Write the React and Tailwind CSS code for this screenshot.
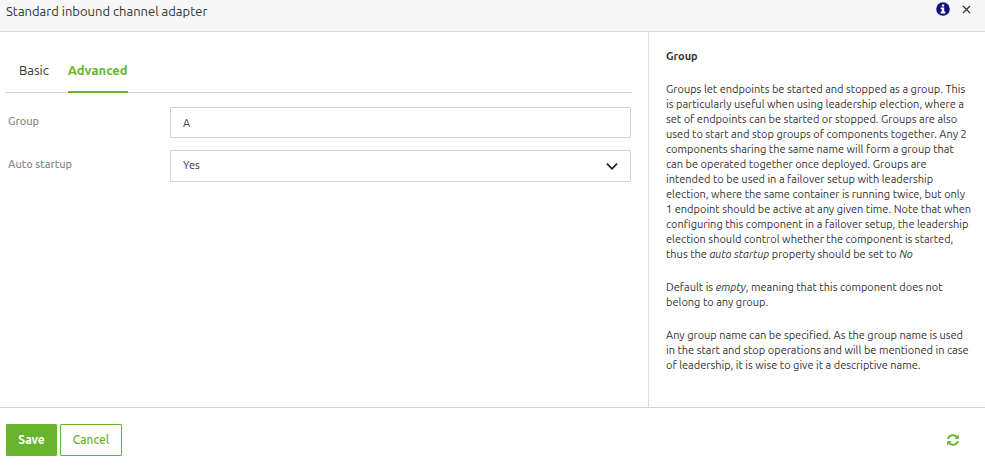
import React, { useState } from 'react';

const tabs = ['Basic', 'Advanced'];

const InfoIcon = () => (
    <svg width="14" height="14" viewBox="0 0 14 14">
        <circle cx="7" cy="7" r="6.8" fill="currentColor" />
        <path d="M5.8 2.4 H8.2 V4.4 H5.8 Z M4.6 5.6 H8.2 V9.6 H9.4 V11.4 H4.6 V9.6 H5.8 V7.3 H4.6 Z" fill="#ffffff" />
    </svg>
);

const RefreshIcon = () => (
    <svg width="12" height="12" viewBox="0 0 12 12" fill="none">
        <path d="M1 5 A5 4.6 0 0 1 9.8 2.9 M11 7 A5 4.6 0 0 1 2.2 9.1" stroke="currentColor" strokeWidth="1.9" />
        <path d="M11.8 0.6 V5 H7.4 Z M0.2 11.4 V7 H4.6 Z" fill="currentColor" />
    </svg>
);

const Header = ({ title }) => (
    <header className="flex h-8 items-start justify-between border-b border-[#dcdcdc] bg-[#f7f7f7] pl-1.5 pr-[11px]">
        <h1 className="text-[13px] leading-[22px]">{title}</h1>
        <div className="flex h-[18px] items-center gap-2">
            <button type="button" aria-label="Info" className="text-[#10107f]">
                <InfoIcon />
            </button>
            <button type="button" aria-label="Close" className="flex h-4 w-4 items-center justify-center">
                <svg width="9" height="9" viewBox="0 0 9 9" fill="none" stroke="currentColor" strokeWidth="1.2">
                    <path d="M1 1 L8 8 M8 1 L1 8" />
                </svg>
            </button>
        </div>
    </header>
);

const Tabs = ({ active, onChange }) => (
    <nav className="flex gap-[19px] border-b border-[#d4d4d4] pl-[13px]">
        {tabs.map((tab) => (
            <button
                key={tab}
                type="button"
                onClick={() => onChange(tab)}
                className={`-mb-px h-[37px] border-b-2 pb-2 text-[13px] leading-5 ${tab === active ? 'border-[#69b42e] font-bold text-[#69b42e]' : 'border-transparent'}`}
            >
                {tab}
            </button>
        ))}
    </nav>
);

const HelpPanel = () => (
    <aside className="w-[337px] shrink-0 border-l border-[#dcdcdc] pl-[17px] pr-3 pt-[17px] text-[11px] leading-[15px]">
        <h2 className="mb-[18px] font-semibold">Group</h2>
        <p className="mb-[18px]">
            Groups let endpoints be started and stopped as a group. This is particularly useful when using
            leadership election, where a set of endpoints can be started or stopped. Groups are also used to
            start and stop groups of components together. Any 2 components sharing the same name will form a
            group that can be operated together once deployed. Groups are intended to be used in a failover
            setup with leadership election, where the same container is running twice, but only 1 endpoint
            should be active at any given time. Note that when configuring this component in a failover setup,
            the leadership election should control whether the component is started, thus the{' '}
            <em>auto startup</em> property should be set to <em>No</em>
        </p>
        <p className="mb-[18px]">
            Default is <em>empty</em>, meaning that this component does not belong to any group.
        </p>
        <p>
            Any group name can be specified. As the group name is used in the start and stop operations and
            will be mentioned in case of leadership, it is wise to give it a descriptive name.
        </p>
    </aside>
);

const App = () => {
    const [activeTab, setActiveTab] = useState('Advanced');
    const [group, setGroup] = useState('A');
    const [autoStartup, setAutoStartup] = useState('Yes');

    return (
        <div className="flex min-h-screen flex-col bg-white font-['Ubuntu','Open_Sans',sans-serif] text-[#333333]">
            <Header title="Standard inbound channel adapter" />
            <main className="flex flex-1">
                <form id="adapter" className="flex-1 pl-1.5 pr-4 pt-6" onSubmit={(e) => e.preventDefault()}>
                    <Tabs active={activeTab} onChange={setActiveTab} />
                    <div className="mt-3.5 grid grid-cols-[162px_1fr] gap-y-3 pl-0.5 pr-px text-[11px]">
                        <label htmlFor="group" className="pt-1 font-medium leading-5 text-[#8a8a8a]">Group</label>
                        <input
                            id="group"
                            value={group}
                            onChange={(e) => setGroup(e.target.value)}
                            className="h-[31px] w-full rounded-[1px] border border-[#d4d4d4] px-3"
                        />
                        <label htmlFor="startup" className="pt-1 font-medium leading-5 text-[#8a8a8a]">Auto startup</label>
                        <div className="relative">
                            <select
                                id="startup"
                                value={autoStartup}
                                onChange={(e) => setAutoStartup(e.target.value)}
                                className="h-8 w-full appearance-none rounded-[1px] border border-[#d4d4d4] px-3 pb-0.5"
                            >
                                <option>Yes</option>
                                <option>No</option>
                            </select>
                            <svg className="pointer-events-none absolute right-[13px] top-3 h-2.5 w-3" viewBox="0 0 12 10" fill="none" stroke="#222222" strokeWidth="1.8">
                                <path d="M1 1.7 L6 6.8 L11 1.7" />
                            </svg>
                        </div>
                    </div>
                </form>
                <HelpPanel />
            </main>
            <footer className="flex h-[63px] items-center justify-between border-t border-[#d4d4d4] pl-1.5 pr-[26px] pt-0.5">
                <div className="flex gap-[3px] text-[12px]">
                    <button type="submit" form="adapter" className="h-8 w-[51px] rounded-[1px] bg-[#69b42e] font-bold text-white">Save</button>
                    <button type="button" className="h-8 w-[62px] rounded-[1px] border border-[#69b42e] font-medium text-[#69b42e]">Cancel</button>
                </div>
                <button type="button" aria-label="Refresh" className="text-[#69b42e]">
                    <RefreshIcon />
                </button>
            </footer>
        </div>
    );
};

export default App;
